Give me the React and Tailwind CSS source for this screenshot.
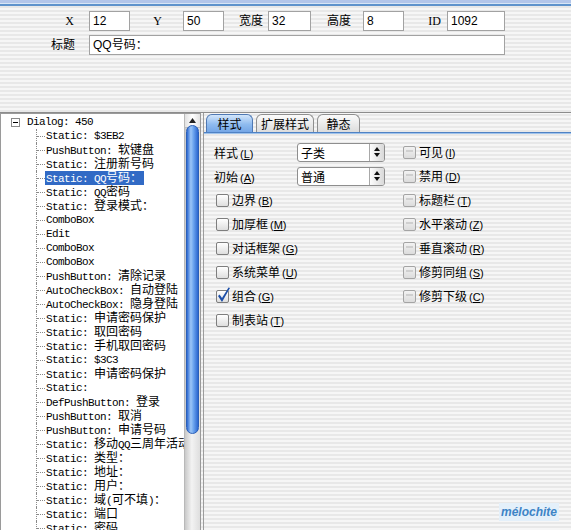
import React from 'react'

const CJK = /([\u2e80-\u9fff\u3000-\u303f\uff00-\uffef]+)/

function Mixed({ text }) {
  return text.split(CJK).map((p, i) =>
    CJK.test(p) ? (
      <span key={i} className="text-[12px] leading-[12px] tracking-normal font-['Noto_Sans_CJK_SC',sans-serif]">{p}</span>
    ) : (
      <span key={i}>{p}</span>
    )
  )
}

const treeItems = [
  'Static: $3EB2',
  'PushButton: 软键盘',
  'Static: 注册新号码',
  'Static: QQ号码：',
  'Static: QQ密码',
  'Static: 登录模式：',
  'ComboBox',
  'Edit',
  'ComboBox',
  'ComboBox',
  'PushButton: 清除记录',
  'AutoCheckBox: 自动登陆',
  'AutoCheckBox: 隐身登陆',
  'Static: 申请密码保护',
  'Static: 取回密码',
  'Static: 手机取回密码',
  'Static: $3C3',
  'Static: 申请密码保护',
  'Static:',
  'DefPushButton: 登录',
  'PushButton: 取消',
  'PushButton: 申请号码',
  'Static: 移动QQ三周年活动',
  'Static: 类型：',
  'Static: 地址：',
  'Static: 用户：',
  'Static: 域(可不填)：',
  'Static: 端口',
  'Static: 密码',
]

const stripes = "bg-[image:repeating-linear-gradient(180deg,#f6f6f6_0px,#f6f6f6_2px,#e8e8e8_2px,#e8e8e8_4px)]"

function Field({ w, value }) {
  return (
    <div className={`${w} h-[20px] bg-white border border-[#a2a2a2] pl-[3px] leading-[18px] text-[12px] font-['Liberation_Sans','Noto_Sans_CJK_SC',sans-serif]`}>
      {value}
    </div>
  )
}

function Label({ w, pr, children }) {
  return (
    <div className={`${w} ${pr} text-right text-[12px] font-['Liberation_Serif','Noto_Sans_CJK_SC',serif]`}>{children}</div>
  )
}

function Key({ label, k }) {
  return (
    <span className="font-['Noto_Sans_CJK_SC',sans-serif] text-[12px] whitespace-nowrap">
      {label}
      <span className="font-['Liberation_Sans',sans-serif] text-[11px] ml-[2px]">(<u>{k}</u>)</span>
    </span>
  )
}

function Select({ value }) {
  return (
    <div className="w-[88px] h-[19px] bg-white border border-[#8e8e8e] rounded-[3px] flex overflow-hidden">
      <span className="flex-1 pl-[3px] leading-[17px] text-[12px] font-['Noto_Sans_CJK_SC',sans-serif]">{value}</span>
      <div className="w-[15px] border-l border-[#a8a8a8] bg-[linear-gradient(90deg,#fdfdfd,#d9d9d9)] flex flex-col items-center justify-center gap-[2px]">
        <svg width="6" height="4" viewBox="0 0 6 4"><path d="M3 0L6 4H0z" fill="#111" /></svg>
        <svg width="6" height="4" viewBox="0 0 6 4"><path d="M0 0H6L3 4z" fill="#111" /></svg>
      </div>
    </div>
  )
}

function Box({ checked, dim }) {
  return (
    <div
      className={`relative shrink-0 w-[13px] h-[13px] rounded-[2px] border ${
        dim
          ? 'border-[#a4a4a4] bg-[linear-gradient(180deg,#f2f2f2,#dcdcdc)]'
          : 'border-[#7e7e7e] bg-[linear-gradient(180deg,#ffffff,#dedede)]'
      }`}
    >
      {dim && <div className="absolute left-[2px] right-[2px] top-[3px] h-[2px] bg-[#cfcfcf]" />}
      {checked && (
        <svg className="absolute -left-[1px] -top-[4px]" width="16" height="17" viewBox="0 0 16 17">
          <path d="M2 9 L6 15 L14 1 L12.5 0.5 L6 11 L3.6 7.6 Z" fill="#1d4fa8" />
        </svg>
      )}
    </div>
  )
}

function Check({ label, k, checked, dim }) {
  return (
    <div className="h-[24px] flex items-center gap-[3px]">
      <Box checked={checked} dim={dim} />
      <Key label={label} k={k} />
    </div>
  )
}

function Tab({ active, w, children }) {
  return (
    <div
      className={`${w} h-[18px] text-center rounded-t-[6px] border border-b-0 leading-[17px] text-[12px] font-['Noto_Sans_CJK_SC',sans-serif] ${
        active
          ? 'border-[#4f79b4] bg-[linear-gradient(180deg,#d3e6fb,#8fbbef_55%,#74a6e6)]'
          : 'border-[#8f8f8f] bg-[linear-gradient(180deg,#fbfbfb,#dcdcdc)]'
      }`}
    >
      {children}
    </div>
  )
}

function Tree() {
  return (
    <div className="flex-1 min-w-0 overflow-hidden font-['Liberation_Mono',monospace] text-[11px] tracking-[-0.6px] leading-[12px] text-black whitespace-nowrap pt-[1px]">
      <div className="h-[14px] flex items-center">
        <div className="ml-[10px] w-[9px] h-[9px] border border-[#8a8a8a] bg-white flex items-center justify-center">
          <div className="w-[5px] h-[1px] bg-black" />
        </div>
        <span className="ml-[7px]">Dialog: 450</span>
      </div>
      {treeItems.map((t, i) => (
        <div key={i} className="h-[14px] flex items-center">
          <div className="shrink-0 ml-[35px] w-[9px] h-[14px] border-l border-dotted border-[#8a8a8a] flex items-center">
            <div className="w-full border-t border-dotted border-[#8a8a8a]" />
          </div>
          <span className={`shrink-0 flex items-center h-[14px] pl-[1px] pr-[2px] ${i === 3 ? 'bg-[#316ac5] text-white' : ''}`}>
            <span className="leading-[12px]"><Mixed text={t} /></span>
          </span>
        </div>
      ))}
    </div>
  )
}

function Scrollbar() {
  return (
    <div className="shrink-0 w-[16px] flex flex-col bg-[linear-gradient(90deg,#c9c9c9,#f3f3f3_45%,#dedede)] border-l border-[#b9b9b9]">
      <div className="h-[14px] flex items-center justify-center bg-[linear-gradient(90deg,#e2e2e2,#ffffff,#e2e2e2)] border-b border-[#bdbdbd]">
        <svg width="7" height="5" viewBox="0 0 7 5"><path d="M3.5 0L7 5H0z" fill="#222" /></svg>
      </div>
      <div className="mt-[-3px] mx-[1px] h-[309px] rounded-full border border-[#2a5fb8] bg-[linear-gradient(90deg,#2d68d0,#9cc6f7_35%,#6aa3ee_60%,#2c67cf)]" />
    </div>
  )
}

export default function App() {
  return (
    <div className={`relative w-[571px] h-[530px] overflow-hidden flex flex-col ${stripes}`}>
      <div className="h-[3px] bg-[#b3c6ea]" />
      <div className="h-[1px] bg-[#d8e6f6]" />
      <div className="h-[2px] bg-[#5f93cc]" />

      <div className="h-[106px] pt-[5px] flex flex-col gap-[4px]">
        <div className="flex items-center">
          <Label w="w-[89px]" pr="pr-[15px]">X</Label>
          <Field w="w-[41px]" value="12" />
          <Label w="w-[53px]" pr="pr-[21px]">Y</Label>
          <Field w="w-[41px]" value="50" />
          <Label w="w-[44px]" pr="pr-[5px]">宽度</Label>
          <Field w="w-[43px]" value="32" />
          <Label w="w-[52px]" pr="pr-[12px]">高度</Label>
          <Field w="w-[41px]" value="8" />
          <Label w="w-[43px]" pr="pr-[6px]">ID</Label>
          <Field w="w-[58px]" value="1092" />
        </div>
        <div className="flex items-center">
          <Label w="w-[89px]" pr="pr-[14px]">标题</Label>
          <Field w="w-[416px]" value="QQ号码：" />
        </div>
      </div>

      <div className="flex-1 flex border-t border-[#8c8c8c] min-h-0">
        <div className="w-[201px] shrink-0 flex bg-white border-l border-t border-[#9a9a9a] border-r">
          <Tree />
          <Scrollbar />
        </div>

        <div className="flex-1 ml-[2px] border-l border-[#9c9c9c] flex flex-col">
          <div className="flex items-end gap-[3px] pl-[2px] pt-[1px]">
            <Tab active w="w-[47px]">样式</Tab>
            <Tab w="w-[58px]">扩展样式</Tab>
            <Tab w="w-[43px]">静态</Tab>
          </div>
          <div className="h-[1px] bg-[#4f82c4]" />
          <div className="h-[1px] bg-[#9fc3ec]" />

          <div className="flex pt-[6px]">
            <div className="w-[199px] pl-[10px] flex flex-col">
              <div className="h-[24px] flex items-center">
                <div className="w-[83px]"><Key label="样式" k="L" /></div>
                <Select value="子类" />
              </div>
              <div className="h-[24px] flex items-center">
                <div className="w-[83px]"><Key label="初始" k="A" /></div>
                <Select value="普通" />
              </div>
              <div className="pl-[2px]">
                <Check label="边界" k="B" />
                <Check label="加厚框" k="M" />
                <Check label="对话框架" k="G" />
                <Check label="系统菜单" k="U" />
                <Check label="组合" k="G" checked />
                <Check label="制表站" k="T" />
              </div>
            </div>
            <div className="flex flex-col">
              <Check label="可见" k="I" dim />
              <Check label="禁用" k="D" dim />
              <Check label="标题栏" k="T" dim />
              <Check label="水平滚动" k="Z" dim />
              <Check label="垂直滚动" k="R" dim />
              <Check label="修剪同组" k="S" dim />
              <Check label="修剪下级" k="C" dim />
            </div>
          </div>
        </div>
      </div>

      <div className="absolute right-[12px] bottom-[9px] px-[2px] bg-[#e4f0fa] italic font-bold text-[12px] text-[#3d84c6] font-['Liberation_Sans',sans-serif]">
        mélochite
      </div>
    </div>
  )
}
